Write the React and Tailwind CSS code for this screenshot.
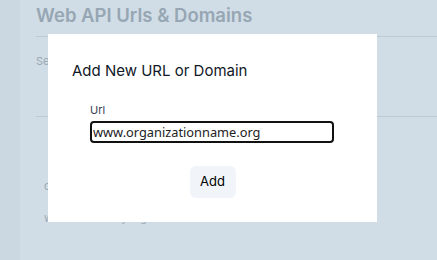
import React from "react";

// Background page (dimmed) with the "Add New URL or Domain" modal on top
export default function App() {
  const font = { fontFamily: "Inter, 'Noto Sans', sans-serif" };

  return (
    <div className="relative w-[437px] h-[260px] overflow-hidden bg-[#d0dde6] flex" style={font}>
      <div className="w-[20px] h-full bg-[#cbd8e1]" />

      <main className="flex-1 pl-[16px] pt-[2px]">
        <h1 className="text-[18.5px] leading-[26px] font-semibold text-[#97a6b3]">Web API Urls &amp; Domains</h1>
        <div className="mt-[8px] border-t border-[#bccad4]" />
        <div className="pt-[16px] text-[11px] text-[#9aa8b4]">Se</div>
        <div className="mt-[46px] border-t border-[#bccad4]" />
        <div className="pl-[8px] pt-[61px] text-[11px] text-[#9aa8b4]">cdn.organization.com</div>
        <div className="pl-[8px] pt-[16px] text-[11px] text-[#9aa8b4]">www.searchanyengine.net</div>
      </main>

      <div className="absolute left-[48px] top-[34px] w-[329px] h-[188px] bg-white">
        <h2 className="pl-[24px] pt-[27px] text-[15px] leading-[20px] text-[#111827]">Add New URL or Domain</h2>
        <div className="pl-[42px] pt-[22px] pr-[43px]">
          <label className="block text-[11px] leading-[14px] text-[#374151]">Url</label>
          <input
            defaultValue="www.organizationname.org"
            className="mt-[4px] w-full h-[22px] px-[1px] border-2 border-[#111] rounded-[4px] text-[12.8px] text-[#222] outline-none"
            style={{ fontFamily: "'Noto Sans', sans-serif" }}
          />
        </div>
        <div className="flex justify-center pt-[23px]">
          <button className="w-[46px] h-[32px] rounded-md bg-[#f1f5f9] text-[13px] text-black">Add</button>
        </div>
      </div>
    </div>
  );
}
